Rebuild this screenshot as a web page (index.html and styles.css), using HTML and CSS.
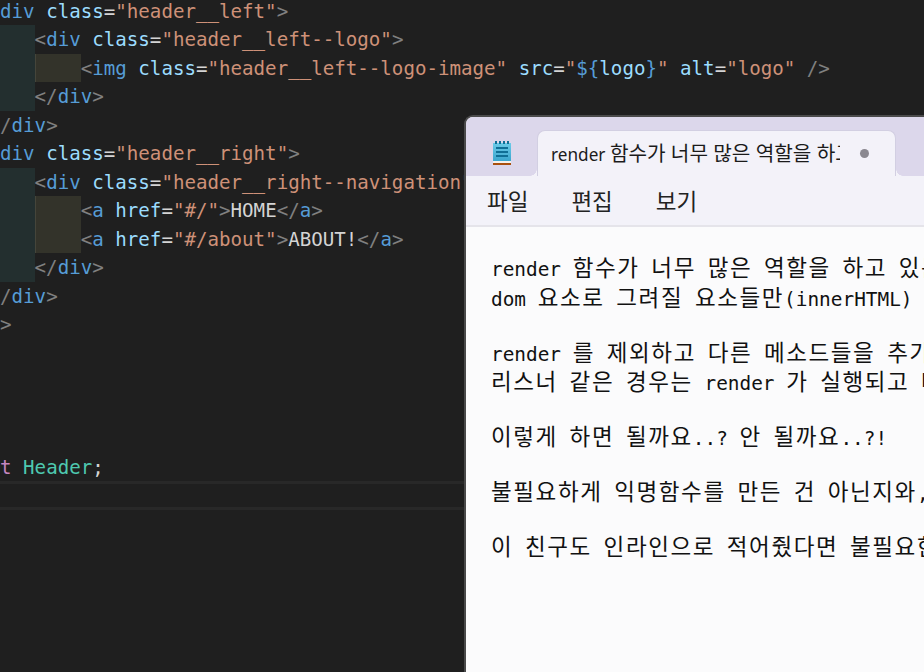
FILE: index.html
```html
<!DOCTYPE html>
<html lang="ko">
<head>
<meta charset="utf-8">
<title>Editor and Notepad</title>
<link rel="stylesheet" href="styles.css">
</head>
<body>
<main class="editor">
  <div class="code">
    <div class="line"><span class="p">&lt;</span><span class="t">div</span> <span class="a">class</span><span class="x">=</span><span class="s">"header__left"</span><span class="p">&gt;</span></div>
    <div class="line"><span class="ind teal"></span><span class="p">&lt;</span><span class="t">div</span> <span class="a">class</span><span class="x">=</span><span class="s">"header__left--logo"</span><span class="p">&gt;</span></div>
    <div class="line"><span class="ind teal"></span><span class="ind olive"></span><span class="p">&lt;</span><span class="t">img</span> <span class="a">class</span><span class="x">=</span><span class="s">"header__left--logo-image"</span> <span class="a">src</span><span class="x">=</span><span class="s">"</span><span class="t">${</span><span class="a">logo</span><span class="t">}</span><span class="s">"</span> <span class="a">alt</span><span class="x">=</span><span class="s">"logo"</span> <span class="p">/&gt;</span></div>
    <div class="line"><span class="ind teal"></span><span class="p">&lt;/</span><span class="t">div</span><span class="p">&gt;</span></div>
    <div class="line"><span class="p">&lt;/</span><span class="t">div</span><span class="p">&gt;</span></div>
    <div class="line"><span class="p">&lt;</span><span class="t">div</span> <span class="a">class</span><span class="x">=</span><span class="s">"header__right"</span><span class="p">&gt;</span></div>
    <div class="line"><span class="ind teal"></span><span class="p">&lt;</span><span class="t">div</span> <span class="a">class</span><span class="x">=</span><span class="s">"header__right--navigation"</span><span class="p">&gt;</span></div>
    <div class="line"><span class="ind teal"></span><span class="ind olive"></span><span class="p">&lt;</span><span class="t">a</span> <span class="a">href</span><span class="x">=</span><span class="s">"#/"</span><span class="p">&gt;</span><span class="x">HOME</span><span class="p">&lt;/</span><span class="t">a</span><span class="p">&gt;</span></div>
    <div class="line"><span class="ind teal"></span><span class="ind olive"></span><span class="p">&lt;</span><span class="t">a</span> <span class="a">href</span><span class="x">=</span><span class="s">"#/about"</span><span class="p">&gt;</span><span class="x">ABOUT!</span><span class="p">&lt;/</span><span class="t">a</span><span class="p">&gt;</span></div>
    <div class="line"><span class="ind teal"></span><span class="p">&lt;/</span><span class="t">div</span><span class="p">&gt;</span></div>
    <div class="line"><span class="p">&lt;/</span><span class="t">div</span><span class="p">&gt;</span></div>
    <div class="line"> <span class="p">&gt;</span></div>
    <div class="line"></div>
    <div class="line"></div>
    <div class="line"></div>
    <div class="line"></div>
    <div class="line line--scrolled"><span class="k">export default</span> <span class="c">Header</span><span class="x">;</span></div>
    <div class="line line--current"></div>
  </div>
</main>

<section class="notepad">
  <header class="tabstrip">
    <span class="app-icon">
      <svg width="20" height="26" viewBox="0 0 20 26" aria-hidden="true">
        <defs>
          <linearGradient id="pad" x1="0" y1="0" x2="0" y2="1">
            <stop offset="0" stop-color="#6ccbe8"/>
            <stop offset="1" stop-color="#3aa6ce"/>
          </linearGradient>
        </defs>
        <rect x="1" y="3" width="18" height="18" fill="url(#pad)"/>
        <rect x="3" y="1" width="2" height="3" fill="#0f6f96"/>
        <rect x="7" y="1" width="2" height="3" fill="#0f6f96"/>
        <rect x="11" y="1" width="2" height="3" fill="#0f6f96"/>
        <rect x="15" y="1" width="2" height="3" fill="#0f6f96"/>
        <rect x="4" y="7" width="12" height="2" fill="#0f6f96"/>
        <rect x="4" y="11" width="12" height="2" fill="#0f6f96"/>
        <rect x="4" y="15" width="12" height="2" fill="#0f6f96"/>
        <rect x="1" y="21" width="18" height="2" fill="#f4f1ec"/>
        <rect x="1" y="23" width="18" height="2" fill="#a9500f"/>
      </svg>
    </span>
    <div class="tab">
      <span class="tab-title">render <span class="tab-ko">함수가 너무 많은 역할을 하고 있는</span></span>
      <span class="tab-dot"></span>
    </div>
  </header>
  <nav class="menubar">
    <span>파일</span>
    <span>편집</span>
    <span>보기</span>
  </nav>
  <div class="note">
    <p>render <span class="ko">함수가</span> <span class="ko">너무</span> <span class="ko">많은</span> <span class="ko">역할을</span> <span class="ko">하고</span> <span class="ko">있는</span><br>dom <span class="ko">요소로</span> <span class="ko">그려질</span> <span class="ko">요소들만</span>(innerHTML) <span class="ko">그리고</span></p>
    <p>render <span class="ko">를</span> <span class="ko">제외하고</span> <span class="ko">다른</span> <span class="ko">메소드들을</span> <span class="ko">추가</span><br><span class="ko">리스너</span> <span class="ko">같은</span> <span class="ko">경우는</span> render <span class="ko">가</span> <span class="ko">실행되고</span> <span class="ko">나서</span></p>
    <p><span class="ko">이렇게</span> <span class="ko">하면</span> <span class="ko">될까요</span>..? <span class="ko">안</span> <span class="ko">될까요</span>..?!</p>
    <p><span class="ko">불필요하게</span> <span class="ko">익명함수를</span> <span class="ko">만든</span> <span class="ko">건</span> <span class="ko">아닌지와</span>,</p>
    <p><span class="ko">이</span> <span class="ko">친구도</span> <span class="ko">인라인으로</span> <span class="ko">적어줬다면</span> <span class="ko">불필요한</span></p>
  </div>
</section>
</body>
</html>
```

FILE: styles.css
```css
* { box-sizing: border-box; }

html, body {
  margin: 0;
  height: 100%;
  overflow: hidden;
  background: #1f1f1f;
}

.editor {
  height: 672px;
  overflow: hidden;
}

.code {
  margin: -3.25px 0 0 -11.5px;
  font-family: "DejaVu Sans Mono", monospace;
  font-size: 19.15px;
  color: #d4d4d4;
}

.line {
  height: 28.5px;
  line-height: 30.5px;
  white-space: pre;
}

.line--scrolled { margin-left: -12ch; }

.line--current {
  border-top: 3px solid #282828;
  border-bottom: 3px solid #282828;
}

.ind {
  display: inline-block;
  width: 4ch;
  height: 28.5px;
  vertical-align: top;
}
.teal { background: #232f2f; }
.olive { background: #33332a; border-left: 1px solid #45453a; }

.p { color: #808080; }
.t { color: #569cd6; }
.a { color: #9cdcfe; }
.s { color: #ce9178; }
.x { color: #d4d4d4; }
.k { color: #c586c0; }
.c { color: #4ec9b0; }

.notepad {
  position: absolute;
  left: 464px;
  top: 115px;
  right: 0;
  bottom: 0;
  display: flex;
  flex-direction: column;
  overflow: hidden;
  border-left: 2px solid #4a4a4a;
  border-top: 2px solid #4a4a4a;
  border-top-left-radius: 9px;
  background: #fbfbfc;
}

.tabstrip {
  display: flex;
  flex: none;
  height: 59px;
  background: #dcd7eb;
}

.app-icon {
  flex: none;
  width: 71px;
  padding: 23px 0 0 26px;
}

.app-icon svg { display: block; }

.tab {
  position: relative;
  display: flex;
  align-items: center;
  width: 359px;
  margin-top: 13px;
  padding: 0 0 0 13px;
  background: #f3f2f9;
  border: 1px solid #d2cfe2;
  border-bottom: 0;
  border-radius: 8px 8px 0 0;
}

.tab::before,
.tab::after {
  content: "";
  position: absolute;
  bottom: 0;
  width: 7px;
  height: 7px;
}

.tab::before {
  left: -8px;
  background: radial-gradient(circle at 0 0, transparent 6.5px, #f3f2f9 7px);
}

.tab::after {
  right: -8px;
  background: radial-gradient(circle at 100% 0, transparent 6.5px, #f3f2f9 7px);
}

.tab-title {
  flex: none;
  width: 289px;
  padding-bottom: 3px;
  overflow: hidden;
  white-space: nowrap;
  font-family: "Noto Sans", "Noto Sans CJK KR", sans-serif;
  font-size: 17.2px;
  color: #1b1b1b;
}

.tab-ko { font-size: 20.2px; }

.tab-dot {
  flex: none;
  width: 9px;
  height: 9px;
  margin-left: 20px;
  border-radius: 50%;
  background: #8a8890;
}

.menubar {
  display: flex;
  flex: none;
  align-items: center;
  gap: 43px;
  height: 51px;
  padding: 0 0 2px 21px;
  background: #f3f2f9;
  border-bottom: 2px solid #e5e4ea;
  font-family: "Noto Sans CJK KR", sans-serif;
  font-size: 22.5px;
  color: #222;
}

.note {
  display: flex;
  flex-direction: column;
  gap: 25.5px;
  padding: 28px 0 0 25px;
  font-family: "DejaVu Sans Mono", "Noto Sans CJK KR", monospace;
  font-size: 19.4px;
  line-height: 29.5px;
  color: #111;
  white-space: nowrap;
}

.note p { margin: 0; }

.ko {
  font-family: "Noto Sans CJK KR", sans-serif;
  font-size: 22.5px;
  letter-spacing: 1.6px;
  line-height: 1;
}
```
